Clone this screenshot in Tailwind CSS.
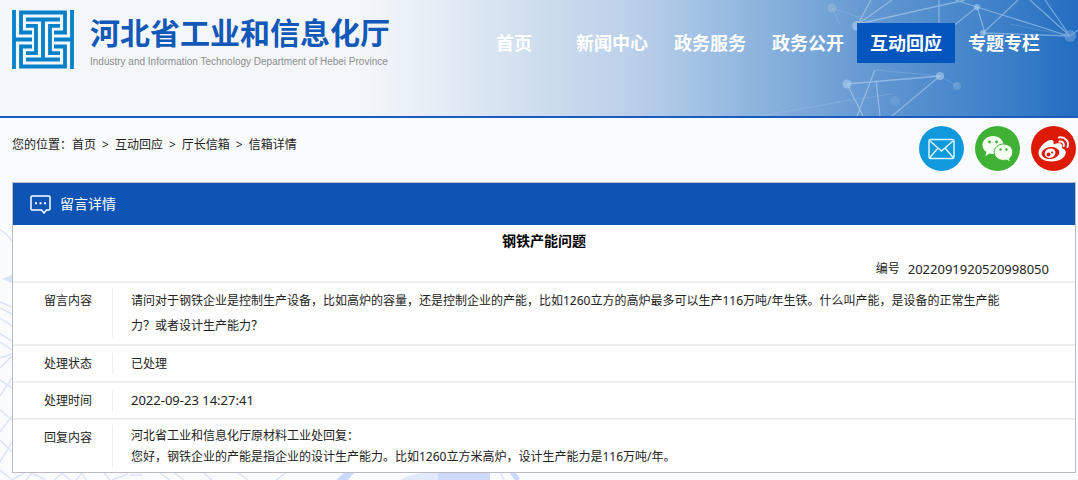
<!DOCTYPE html>
<html lang="zh-CN">
<head>
  <meta charset="UTF-8" />
  <meta name="viewport" content="width=device-width, initial-scale=1.0"/>
  <title>河北省工业和信息化厅</title>
  <script src="https://cdn.jsdelivr.net/npm/@tailwindcss/browser@4"></script>
</head>
<body class="relative min-h-screen bg-[#fafbfd] font-['Noto_Sans','Noto_Sans_CJK_SC',sans-serif] text-xs text-[#222] overflow-x-hidden">

  <!-- Page background pattern -->
  <svg class="absolute left-0 top-[220px] -z-10" width="600" height="260" viewBox="0 220 600 260" fill="none" stroke="#dbe4fb" stroke-width="1.5" aria-hidden="true">
    <path d="M0 230Q6 233 12 241M0 302l12 5M0 308l12 6M0 318l12 8M0 334l12 7M0 342l12 8M0 358l12-4M0 368l12-12M0 380l12 8M0 396l12-18M0 410l12 10M0 432l12-16M0 440l12 12M0 462l12-20"/>
    <path d="M2 279l10-4v8z" fill="#d5e4f8" stroke="none"/>
    <path d="M0 470l12 10M12 480l12-7M26 480l6-7 14 7M54 480l8-7 8 7M76 480l6-7 4 7M104 473l6 7M112 480l16-6M130 475h12M160 473l10 7M174 473l10 7M204 473l8 7M238 473l10 7M276 480l10-7"/>
    <path d="M336 480l8-7h10l-6 7z" fill="#cdd9fa" stroke="none"/>
    <path d="M400 480q14-8 38-8h52v8z" fill="#e2e9fc" stroke="none"/>
    <path d="M438 472h52v8h-52z" fill="#cdd9fa" stroke="none"/>
    <path d="M500 472l4 8"/>
    <path d="M512 472l6 8" stroke="#cdd9fa" stroke-width="5"/>
  </svg>

  <!-- Site header -->
  <header class="relative h-[118px] flex items-start justify-between overflow-hidden border-b-2 border-[#1a5cc0] bg-[linear-gradient(90deg,#f4f7fa_33%,#e9eff7_39%,#c9daec_52%,#bdd1ea_58%,#a2c2e4_65%,#8ab2dc_71%,#5f95d0_82%,#3d80c9_93%,#226dc0)]">
    <svg class="absolute right-0 top-0" width="338" height="116" viewBox="0 0 338 116" stroke="#c4daf2" stroke-opacity=".5" fill="#b7d2f0" fill-opacity=".55" aria-hidden="true">
      <path d="M118 24L131 0M118 24L152 0M118 24L225 0M199 0V24M215 0l22 7M237 7l92 29M237 7l-25 20M237 7l8 26M243 33L278 0M290 0l40 36M305 0l25 36M330 36l8-6M243 33l87 3M107 84l93-8M107 84l16 32M135 70l-18 46M136 80l4 36M200 76l-48 40" stroke-width="1.3" fill="none"/>
      <path d="M92 8l40 14M100 25l-8-17M330 36l-60-12M135 70l65 6 17 10M97 102l55-8M20 116l80-14" stroke-width=".8" stroke-opacity=".25" fill="none"/>
      <g stroke="none">
        <circle cx="117" cy="26" r="5"/><circle cx="237" cy="7" r="3"/><circle cx="243" cy="33" r="3"/><circle cx="107" cy="84" r="4.5"/><circle cx="200" cy="76" r="4"/>
        <circle cx="92" cy="8" r="4.5" fill-opacity=".25"/><circle cx="217" cy="86" r="4" fill-opacity=".25"/><circle cx="155" cy="101" r="5" fill-opacity=".15"/><circle cx="330" cy="36" r="6" fill="#75a6dc"/>
      </g>
    </svg>

    <a href="#" class="relative flex pl-3 pt-[10px]">
      <svg width="62" height="59" viewBox="0 0 62 59" fill="none" stroke="#0680c9" stroke-width="3.8" aria-hidden="true">
        <path d="M2 0v59M60 0v59M2 29.5h18M42 29.5h18"/>
        <path d="M20 22.5H9V2.5h44v20H42M20 36.5H9v20h44v-20H42"/>
        <path d="M14 9.5h34M31 9.5v40M14 49.5h34"/>
        <path d="M14 15.8h10v27.400H14M48 15.800H38v27.400h10"/>
      </svg>
      <div class="pl-4">
        <h1 class="text-[30px] leading-[46px] font-bold text-[#1158b8]">河北省工业和信息化厅</h1>
        <p class="font-['Liberation_Sans',sans-serif] text-[10px] leading-3 text-[#8b8d90]">Industry and Information Technology Department of Hebei Province</p>
      </div>
    </a>

    <nav class="relative flex pt-[23px] pr-[25px] text-lg leading-[40px] font-bold text-white text-center whitespace-nowrap">
      <a href="#" class="w-[98px]">首页</a>
      <a href="#" class="w-[98px]">新闻中心</a>
      <a href="#" class="w-[98px]">政务服务</a>
      <a href="#" class="w-[98px]">政务公开</a>
      <a href="#" class="w-[98px] bg-[#0456be]">互动回应</a>
      <a href="#" class="w-[98px]">专题专栏</a>
    </nav>
  </header>

  <!-- Breadcrumb and share buttons -->
  <div class="h-16 flex items-start justify-between pl-3 pr-[2px]">
    <div class="flex pt-4 leading-[22px]">
      <span>您的位置：</span>
      <div class="flex gap-[6px]">
        <a href="#">首页</a><span>&gt;</span>
        <a href="#">互动回应</a><span>&gt;</span>
        <a href="#">厅长信箱</a><span>&gt;</span>
        <span>信箱详情</span>
      </div>
    </div>
    <div class="flex gap-[11px] pt-2">
      <button aria-label="邮箱" class="size-[45px] rounded-full bg-[#109add]">
        <svg viewBox="0 0 45 45" fill="none" stroke="#d9f3ff" stroke-width="1.5">
          <rect x="10" y="13.5" width="25" height="19" rx="1.5"/>
          <path d="M10.5 14.5L22.5 25l12-10.5M10.5 32l8.5-10M34.5 32L26 22"/>
        </svg>
      </button>
      <button aria-label="微信" class="size-[45px] rounded-full bg-[#3fb135]">
        <svg viewBox="0 0 45 45">
          <path d="M18 10c-6 0-10.500 4-10.500 9 0 3 1.500 5.500 4 7l-1.200 4 4.500-2.500c1 .3 2 .4 3.200.4C24 28 28.500 24 28.500 19S24 10 18 10z" fill="#f5fff2"/>
          <path d="M28.500 18c-5.200 0-9.300 3.600-9.300 8.200s4 8.200 9.300 8.200c1 0 2-.1 3-.4l4 2.200-1-3.700c2-1.400 3.300-3.700 3.300-6.300 0-4.600-4-8.200-9.300-8.200z" fill="#f5fff2" stroke="#3fb135"/>
          <g fill="#3fb135"><circle cx="14.5" cy="16" r="1.4"/><circle cx="21.5" cy="16" r="1.4"/><circle cx="25.5" cy="23.5" r="1.2"/><circle cx="31.5" cy="23.5" r="1.2"/></g>
        </svg>
      </button>
      <button aria-label="微博" class="size-[45px] rounded-full bg-[#dc1a05]">
        <svg viewBox="0 0 45 45">
          <path d="M7.500 27c0-6 8-13 12.500-13 2.500 0 3 2 2.500 4.500 3-1.200 7.500-2 8.500.5.600 1.300 0 2.500-.2 3 2.500.8 4 2.200 4 4.500 0 5-6.500 9-14 9s-13.300-3.500-13.300-8.500z" fill="#fff"/>
          <ellipse cx="19.5" cy="27" rx="9" ry="6" fill="#dc1a05" transform="rotate(-8 19.5 27)"/>
          <ellipse cx="19" cy="27.2" rx="5.5" ry="4.6" fill="#fff" transform="rotate(-20 19 27)"/>
          <circle cx="17.5" cy="28.5" r="2" fill="#dc1a05"/><circle cx="21" cy="26.5" r="1" fill="#dc1a05"/>
          <path d="M28 11.500c6-1 10.500 4 8.500 9.500M28.500 15.500c3-.5 5 1.800 4.200 4.500" fill="none" stroke="#fff" stroke-width="2" stroke-linecap="round"/>
        </svg>
      </button>
    </div>
  </div>

  <!-- Message detail -->
  <main class="ml-3 mr-[2px] bg-white border border-[#b9bbbe]">
    <div class="h-[42px] flex items-center gap-[9px] pl-[17px] bg-[#0d54b5] text-white text-sm">
      <svg width="21" height="19" viewBox="0 0 21 19" fill="none" stroke="#fff" stroke-width="1.5" aria-hidden="true">
        <path d="M2 1h17q1 0 1 1v12q0 1-1 1h-2.500l-2.500 3-2.500-3H2q-1 0-1-1V2q0-1 1-1z"/>
        <path d="M5 8.200h2M9.500 8.200h2M14 8.200h2" stroke-width="2"/>
      </svg>
      <h2>留言详情</h2>
    </div>
    <h3 class="pt-1 text-sm leading-6 font-bold text-black text-center">钢铁产能问题</h3>
    <p class="flex justify-end gap-2 pt-1 pr-[26px] leading-6"><span>编号</span><span class="text-[13px]">2022091920520998050</span></p>

    <table class="w-full border-collapse">
      <tbody>
        <tr class="border-t-2 border-[#eeeff0]">
          <th scope="row" class="w-[99px] pl-[31px] pt-2 text-left font-normal align-top leading-5">留言内容</th>
          <td class="pt-[5px] pb-[6px] pr-10 leading-[25px]">
            <div class="border-l border-[#eeeff0] pl-[18px]">请问对于钢铁企业是控制生产设备，比如高炉的容量，还是控制企业的产能，比如1260立方的高炉最多可以生产116万吨/年生铁。什么叫产能，是设备的正常生产能<br>力？或者设计生产能力？</div>
          </td>
        </tr>
        <tr class="border-t-2 border-[#eeeff0]">
          <th scope="row" class="pl-[31px] text-left font-normal">处理状态</th>
          <td class="py-[7px] leading-[21px]"><div class="border-l border-[#eeeff0] pl-[18px]">已处理</div></td>
        </tr>
        <tr class="border-t-2 border-[#eeeff0]">
          <th scope="row" class="pl-[31px] text-left font-normal">处理时间</th>
          <td class="py-[7px] text-[13px] leading-[21px]"><div class="border-l border-[#eeeff0] pl-[18px]">2022-09-23 14:27:41</div></td>
        </tr>
        <tr class="border-t-2 border-[#eeeff0]">
          <th scope="row" class="pl-[31px] pt-2 text-left font-normal align-top leading-5">回复内容</th>
          <td class="pt-[5px] pb-[5px] leading-[21px]">
            <div class="border-l border-[#eeeff0] pl-[18px]">河北省工业和信息化厅原材料工业处回复：<br>您好，钢铁企业的产能是指企业的设计生产能力。比如1260立方米高炉，设计生产能力是116万吨/年。</div>
          </td>
        </tr>
      </tbody>
    </table>
  </main>
</body>
</html>
